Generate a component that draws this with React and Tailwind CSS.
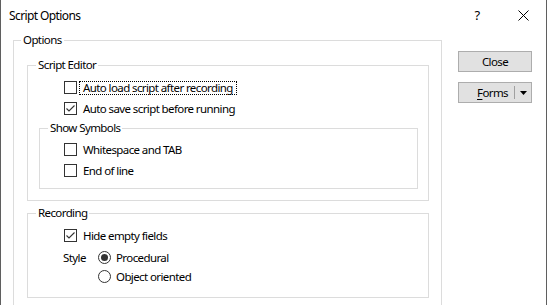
import React from 'react';

const font = { fontFamily: '"Noto Sans", "Open Sans", sans-serif' };

function Check({ checked }) {
  return (
    <span className="w-[13px] h-[13px] border border-[#333333] bg-white shrink-0 flex items-center justify-center">
      {checked && (
        <svg width="11" height="11" viewBox="0 0 11 11">
          <polyline points="1.5,5.5 4,8 9.5,2.5" fill="none" stroke="#333333" strokeWidth="1.1" />
        </svg>
      )}
    </span>
  );
}

function Radio({ checked }) {
  return (
    <span className="w-[13px] h-[13px] rounded-full border border-[#333333] bg-white shrink-0 flex items-center justify-center">
      {checked && <span className="w-[7px] h-[7px] rounded-full bg-[#333333]" />}
    </span>
  );
}

function CheckRow({ label, checked, focused }) {
  return (
    <div className="h-[21px] flex items-center">
      <Check checked={checked} />
      <span
        className={`ml-[2px] px-[3px] h-[14px] flex items-center border border-dotted ${
          focused ? 'border-black' : 'border-transparent'
        }`}
      >
        {label}
      </span>
    </div>
  );
}

function Group({ label, className = '', labelClass = 'ml-[8px]', children }) {
  return (
    <div className={`border border-[#dcdcdc] flex flex-col ${className}`}>
      <div className={`-mt-[9px] h-[16px] leading-[16px] self-start bg-white px-[2px] ${labelClass}`}>
        {label}
      </div>
      {children}
    </div>
  );
}

export default function App() {
  return (
    <div
      className="w-[547px] h-[305px] bg-white border-l border-r border-[#5f5f5f] text-[11.5px] tracking-[-0.6px] text-black overflow-hidden flex flex-col"
      style={font}
    >
      <div className="h-[31px] shrink-0 flex items-center">
        <span className="pl-[8px] flex-1 text-[12px] tracking-[-0.6px]">Script Options</span>
        <span className="w-[46px] h-full flex items-center justify-center text-[13px]">?</span>
        <span className="w-[46px] h-full flex items-center justify-center">
          <svg width="11" height="11" viewBox="0 0 11 11">
            <path d="M0.5 0.5 L10.5 10.5 M10.5 0.5 L0.5 10.5" stroke="#000" strokeWidth="1" />
          </svg>
        </span>
      </div>

      <div className="flex pl-[12px] pt-[9px]">
        <Group label="Options" labelClass="ml-[7px]" className="w-[429px] h-[300px] shrink-0">
          <div className="flex flex-col pl-[13px] pr-[12px]">
            <Group label="Script Editor" className="mt-[17px]">
              <div className="flex flex-col pl-[36px] mt-[4px]">
                <CheckRow label="Auto load script after recording" focused />
                <CheckRow label="Auto save script before running" checked />
              </div>
              <Group label="Show Symbols" className="ml-[11px] mr-[10px] mt-[9px] mb-[11px]">
                <div className="flex flex-col pl-[24px] mt-[3px] pb-[7px]">
                  <CheckRow label="Whitespace and TAB" />
                  <CheckRow label="End of line" />
                </div>
              </Group>
            </Group>

            <Group label="Recording" className="mt-[12px]">
              <div className="flex flex-col pl-[36px] mt-[4px] pb-[11px]">
                <CheckRow label="Hide empty fields" checked />
                <div className="flex mt-[2px]">
                  <span className="w-[35px] -ml-[1px] h-[19px] flex items-center">Style</span>
                  <div className="flex flex-col">
                    <div className="h-[19px] flex items-center gap-[5px]">
                      <Radio checked />
                      <span>Procedural</span>
                    </div>
                    <div className="h-[19px] flex items-center gap-[5px]">
                      <Radio />
                      <span>Object oriented</span>
                    </div>
                  </div>
                </div>
              </div>
            </Group>
          </div>
        </Group>

        <div className="ml-[16px] mt-[11px] flex flex-col gap-[10px]">
          <button className="w-[74px] h-[21px] bg-[#e1e1e1] border border-[#adadad] flex items-center justify-center">
            Close
          </button>
          <button className="w-[74px] h-[21px] bg-[#e1e1e1] border border-[#adadad] flex items-center justify-end">
            <span>
              <span className="underline underline-offset-2">F</span>orms
            </span>
            <span className="ml-[6px] w-px h-[13px] bg-[#a0a0a0]" />
            <span className="w-[16px] flex items-center justify-center">
              <svg width="7" height="4" viewBox="0 0 7 4">
                <path d="M0 0 H7 L3.5 4 Z" fill="#000" />
              </svg>
            </span>
          </button>
        </div>
      </div>
    </div>
  );
}
